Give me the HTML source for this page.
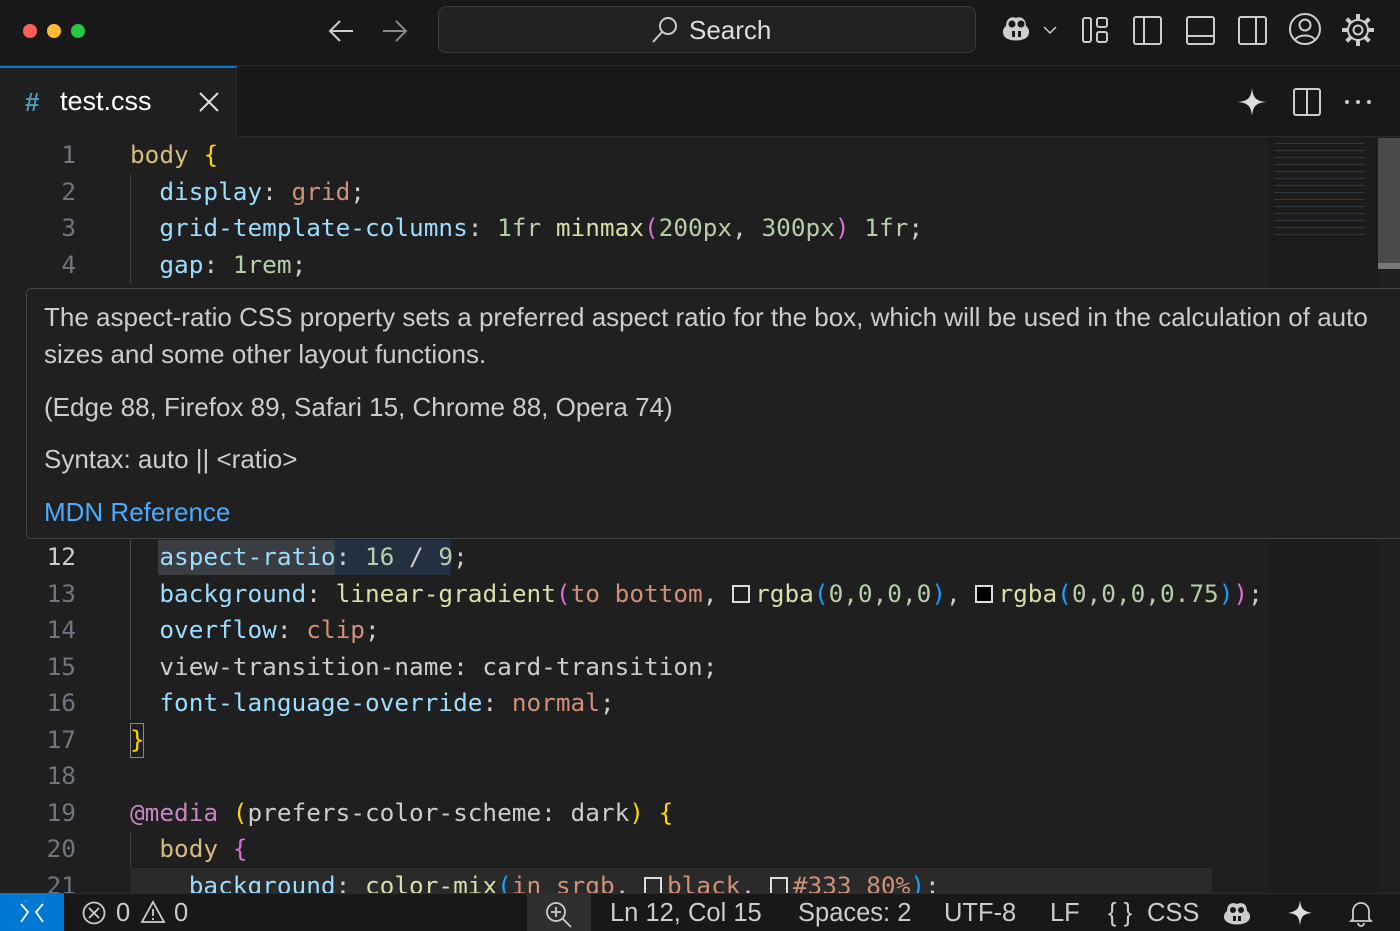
<!DOCTYPE html>
<html><head><meta charset="utf-8"><style>
*{margin:0;padding:0;box-sizing:border-box}
body{width:1400px;height:931px;overflow:hidden;background:#1f1f1f;font-family:"Liberation Sans",sans-serif;color:#ccc;position:relative}
.abs{position:absolute}
.title{left:0;top:0;width:1400px;height:66px;background:#181818;border-bottom:1px solid #2b2b2b}
.tabs{left:0;top:66px;width:1400px;height:71px;background:#181818;border-bottom:1px solid #2b2b2b}
.tab{left:0;top:66px;width:237px;height:72px;background:#1f1f1f;border-top:2px solid #0078d4;border-right:1px solid #2b2b2b}
.code{font-family:"DejaVu Sans Mono","Liberation Mono",monospace;font-size:24.4px;white-space:pre;line-height:36.5px}
.ln{left:0;width:76px;text-align:right;color:#6e7681}
.p{color:#9cdcfe}.v{color:#ce9178}.s{color:#d7ba7d}.b{color:#ffd700}.n{color:#b5cea8}.f{color:#dcdcaa}.m{color:#c586c0}.pb{color:#179fff}.pp{color:#da70d6}.w{color:#ccc}
.sw{display:inline-block;width:18px;height:18px;border:2px solid #ddd;vertical-align:-1px;margin-right:5px}
.hover{left:26px;top:288px;width:1390px;height:251px;background:#202020;border:1px solid #454545;border-radius:5px;font-size:26px;color:#cccccc}
.hover div{position:absolute;left:17px;white-space:nowrap}
.status{left:0;top:893px;width:1400px;height:38px;background:#181818;border-top:1px solid #2b2b2b;font-size:25.5px;color:#ccc}
.status span{position:absolute;top:5px;white-space:nowrap}
svg{position:absolute}
</style></head><body>
<div class="abs title"></div>
<div class="abs" style="left:23px;top:24px;width:14px;height:14px;border-radius:50%;background:#fe5f57"></div>
<div class="abs" style="left:47px;top:24px;width:14px;height:14px;border-radius:50%;background:#febc2e"></div>
<div class="abs" style="left:71px;top:24px;width:14px;height:14px;border-radius:50%;background:#28c840"></div>
<svg style="left:326px;top:17px" width="30" height="28" viewBox="0 0 30 28"><path d="M27 14H4M14 4L4 14l10 10" fill="none" stroke="#ccc" stroke-width="2"/></svg>
<svg style="left:380px;top:17px" width="30" height="28" viewBox="0 0 30 28"><path d="M3 14h23M16 4l10 10-10 10" fill="none" stroke="#888" stroke-width="2"/></svg>
<div class="abs" style="left:438px;top:6px;width:538px;height:47px;border:1px solid #3c3c3c;border-radius:8px;background:#222"></div>
<svg style="left:650px;top:15px" width="30" height="30" viewBox="0 0 30 30"><circle cx="18" cy="11" r="8" fill="none" stroke="#ccc" stroke-width="2"/><path d="M12 17L3 27" stroke="#ccc" stroke-width="2"/></svg>
<div class="abs" style="left:689px;top:15px;font-size:26px;color:#ddd">Search</div>
<svg style="left:1000px;top:12px" width="64" height="36" viewBox="0 0 64 36"><path d="M6 14c0-8 6-10 10-8 4-2 10 0 10 8 3 2 4 6 2 10-4 6-20 6-24 0-2-4-1-8 2-10z" fill="#ccc"/><circle cx="12" cy="12" r="3.5" fill="#181818"/><circle cx="21" cy="12" r="3.5" fill="#181818"/><rect x="12" y="19" width="3" height="6" fill="#181818"/><rect x="18" y="19" width="3" height="6" fill="#181818"/><path d="M44 15l6 6 6-6" fill="none" stroke="#ccc" stroke-width="1.5"/></svg>
<svg style="left:1080px;top:14px" width="32" height="32" viewBox="0 0 32 32"><rect x="3" y="4" width="8" height="24" rx="2" fill="none" stroke="#ccc" stroke-width="2"/><rect x="17" y="4" width="10" height="9" rx="2" fill="none" stroke="#ccc" stroke-width="2"/><rect x="17" y="18" width="10" height="10" rx="2" fill="none" stroke="#ccc" stroke-width="2"/></svg>
<svg style="left:1131px;top:14px" width="32" height="32" viewBox="0 0 32 32"><rect x="3" y="3" width="27" height="27" rx="2" fill="none" stroke="#ccc" stroke-width="2"/><path d="M13 3v27" stroke="#ccc" stroke-width="2"/></svg>
<svg style="left:1184px;top:14px" width="32" height="32" viewBox="0 0 32 32"><rect x="3" y="3" width="27" height="27" rx="2" fill="none" stroke="#ccc" stroke-width="2"/><path d="M3 22h27" stroke="#ccc" stroke-width="2"/></svg>
<svg style="left:1236px;top:14px" width="32" height="32" viewBox="0 0 32 32"><rect x="3" y="3" width="27" height="27" rx="2" fill="none" stroke="#ccc" stroke-width="2"/><path d="M20 3v27" stroke="#ccc" stroke-width="2"/></svg>
<svg style="left:1288px;top:12px" width="36" height="36" viewBox="0 0 36 36"><circle cx="17" cy="17" r="15" fill="none" stroke="#ccc" stroke-width="2"/><circle cx="17" cy="13" r="5.5" fill="none" stroke="#ccc" stroke-width="2"/><path d="M7 28c3-6 17-6 20 0" fill="none" stroke="#ccc" stroke-width="2"/></svg>
<svg style="left:1340px;top:12px" width="36" height="36" viewBox="0 0 36 36"><g fill="none" stroke="#ccc" stroke-width="2"><circle cx="18" cy="18" r="10"/><circle cx="18" cy="18" r="4.5"/><path d="M18 2v6M18 28v6M2 18h6M28 18h6M6.7 6.7l4.2 4.2M25.1 25.1l4.2 4.2M6.7 29.3l4.2-4.2M25.1 10.9l4.2-4.2" stroke-width="4"/></g></svg>
<div class="abs tabs"></div>
<div class="abs tab"></div>
<div class="abs" style="left:25px;top:87px;font-size:26px;font-weight:bold;color:#519aba">#</div>
<div class="abs" style="left:60px;top:86px;font-size:27px;color:#fff">test.css</div>
<svg style="left:198px;top:91px" width="22" height="22" viewBox="0 0 22 22"><path d="M2 2l18 18M20 2L2 20" stroke="#ddd" stroke-width="2"/></svg>
<svg style="left:1236px;top:86px" width="32" height="32" viewBox="0 0 32 32"><path d="M16 2C17 12 20 15 30 16 20 17 17 20 16 30 15 20 12 17 2 16 12 15 15 12 16 2z" fill="#ddd"/></svg>
<svg style="left:1291px;top:86px" width="32" height="32" viewBox="0 0 32 32"><rect x="3" y="3" width="26" height="26" rx="2" fill="none" stroke="#ccc" stroke-width="2"/><path d="M16 3v26" stroke="#ccc" stroke-width="2"/></svg>
<div class="abs" style="left:1345px;top:100px;width:4px;height:4px;background:#ccc;border-radius:50%;box-shadow:11px 0 #ccc,22px 0 #ccc"></div>
<div class="abs" style="left:1268px;top:138px;width:110px;height:755px;background:#1c1c1c"></div>
<div class="abs" style="left:1378px;top:138px;width:22px;height:125px;background:#4a4a4a"></div>
<div class="abs" style="left:1378px;top:263px;width:22px;height:6px;background:#777"></div>
<div class="abs" style="left:1274px;top:140px;width:90px;height:100px;background:repeating-linear-gradient(#1c1c1c 0 3px,#5a6b7a 3px 4px,#1c1c1c 4px 7px);opacity:.35"></div>
<div class="abs" style="left:130px;top:174px;width:1px;height:110px;background:#404040"></div>
<div class="abs" style="left:130px;top:540px;width:1px;height:180px;background:#505050"></div>
<div class="abs" style="left:130px;top:832px;width:1px;height:60px;background:#404040"></div>
<div class="abs" style="left:158px;top:540px;width:177px;height:35px;background:#3a3d41"></div>
<div class="abs" style="left:335px;top:540px;width:116px;height:35px;background:#233040"></div>
<div class="abs" style="left:130px;top:723px;width:14px;height:35px;border:1px solid #888"></div>
<div class="abs" style="left:130px;top:868px;width:1082px;height:25px;background:#2a2a2a"></div>
<div class="abs code ln" style="top:137px">1
2
3
4</div>
<div class="abs code ln" style="top:539px"><span style="color:#ccc">12</span>
13
14
15
16
17
18
19
20
21</div>
<div class="abs code" style="left:130px;top:137px"><span class="s">body</span> <span class="b">{</span>
  <span class="p">display</span><span class="w">:</span> <span class="v">grid</span><span class="w">;</span>
  <span class="p">grid-template-columns</span><span class="w">:</span> <span class="n">1fr</span> <span class="f">minmax</span><span class="pp">(</span><span class="n">200px</span><span class="w">,</span> <span class="n">300px</span><span class="pp">)</span> <span class="n">1fr</span><span class="w">;</span>
  <span class="p">gap</span><span class="w">:</span> <span class="n">1rem</span><span class="w">;</span></div>
<div class="abs code" style="left:130px;top:539px">  <span class="p">aspect-ratio</span><span class="w">:</span> <span class="n">16</span> <span class="w">/</span> <span class="n">9</span><span class="w">;</span>
  <span class="p">background</span><span class="w">:</span> <span class="f">linear-gradient</span><span class="pp">(</span><span class="v">to bottom</span><span class="w">,</span> <span class="sw" style="background:transparent"></span><span class="f">rgba</span><span class="pb">(</span><span class="n">0,0,0,0</span><span class="pb">)</span><span class="w">,</span> <span class="sw" style="background:#000"></span><span class="f">rgba</span><span class="pb">(</span><span class="n">0,0,0,0.75</span><span class="pb">)</span><span class="pp">)</span><span class="w">;</span>
  <span class="p">overflow</span><span class="w">:</span> <span class="v">clip</span><span class="w">;</span>
  <span class="w">view-transition-name: card-transition;</span>
  <span class="p">font-language-override</span><span class="w">:</span> <span class="v">normal</span><span class="w">;</span>
<span class="b">}</span>

<span class="m">@media</span> <span class="b">(</span><span class="w">prefers-color-scheme: dark</span><span class="b">)</span> <span class="b">{</span>
  <span class="s">body</span> <span class="pp">{</span>
    <span class="p">background</span><span class="w">:</span> <span class="f">color-mix</span><span class="pb">(</span><span class="v">in srgb</span><span class="w">,</span> <span class="sw"></span><span class="v">black</span><span class="w">,</span> <span class="sw"></span><span class="v">#333 80%</span><span class="pb">)</span><span class="w">;</span></div>
<div class="abs hover">
<div style="top:13px">The aspect-ratio CSS property sets a preferred aspect ratio for the box, which will be used in the calculation of auto</div>
<div style="top:50px">sizes and some other layout functions.</div>
<div style="top:103px">(Edge 88, Firefox 89, Safari 15, Chrome 88, Opera 74)</div>
<div style="top:155px">Syntax: auto || &lt;ratio&gt;</div>
<div style="top:208px;color:#4daafc">MDN Reference</div>
</div>
<div class="abs status">
<div class="abs" style="left:0;top:-1px;width:64px;height:38px;background:#0078d4"></div>
<svg style="left:18px;top:6px" width="28" height="26" viewBox="0 0 28 26"><path d="M3 4l7 8-7 10M25 4l-7 8 7 10" fill="none" stroke="#fff" stroke-width="1.8"/></svg>
<svg style="left:82px;top:7px" width="26" height="26" viewBox="0 0 26 26"><circle cx="12" cy="12" r="10.5" fill="none" stroke="#ccc" stroke-width="1.8"/><path d="M7 7l10 10M17 7L7 17" stroke="#ccc" stroke-width="1.8"/></svg>
<span style="left:116px">0</span>
<svg style="left:140px;top:6px" width="26" height="26" viewBox="0 0 26 26"><path d="M13 2L24 22H2z" fill="none" stroke="#ccc" stroke-width="1.8"/><path d="M13 9v7M13 18v2" stroke="#ccc" stroke-width="1.8"/></svg>
<span style="left:174px">0</span>
<div class="abs" style="left:527px;top:-1px;width:64px;height:38px;background:#2f2f2f"></div>
<svg style="left:544px;top:6px" width="30" height="30" viewBox="0 0 30 30"><circle cx="12" cy="12" r="9" fill="none" stroke="#ccc" stroke-width="1.8"/><path d="M18 18l9 9M12 7v10M7 12h10" stroke="#ccc" stroke-width="1.8"/></svg>
<span style="left:610px">Ln 12, Col 15</span>
<span style="left:798px">Spaces: 2</span>
<span style="left:944px">UTF-8</span>
<span style="left:1050px">LF</span>
<span style="left:1108px">{ }</span>
<span style="left:1147px">CSS</span>
<svg style="left:1223px;top:6px" width="32" height="28" viewBox="0 0 32 28"><path d="M4 11c0-8 6-9 10-7 4-2 10-1 10 7 3 2 4 6 2 9-4 6-20 6-24 0-2-3-1-7 2-9z" fill="#ccc"/><circle cx="10" cy="10" r="3" fill="#181818"/><circle cx="18" cy="10" r="3" fill="#181818"/><rect x="10" y="16" width="3" height="5" fill="#181818"/><rect x="15" y="16" width="3" height="5" fill="#181818"/></svg>
<svg style="left:1286px;top:5px" width="28" height="28" viewBox="0 0 28 28"><path d="M14 1C15 10 17 12 26 14 17 15 15 17 14 27 13 17 11 15 2 14 11 12 13 10 14 1z" fill="#ddd"/></svg>
<svg style="left:1348px;top:5px" width="26" height="28" viewBox="0 0 26 28"><path d="M5 20V12a8 8 0 0116 0v8l2 2H3z M10 24a3 3 0 006 0" fill="none" stroke="#ccc" stroke-width="1.8"/></svg>
</div>
</body></html>
